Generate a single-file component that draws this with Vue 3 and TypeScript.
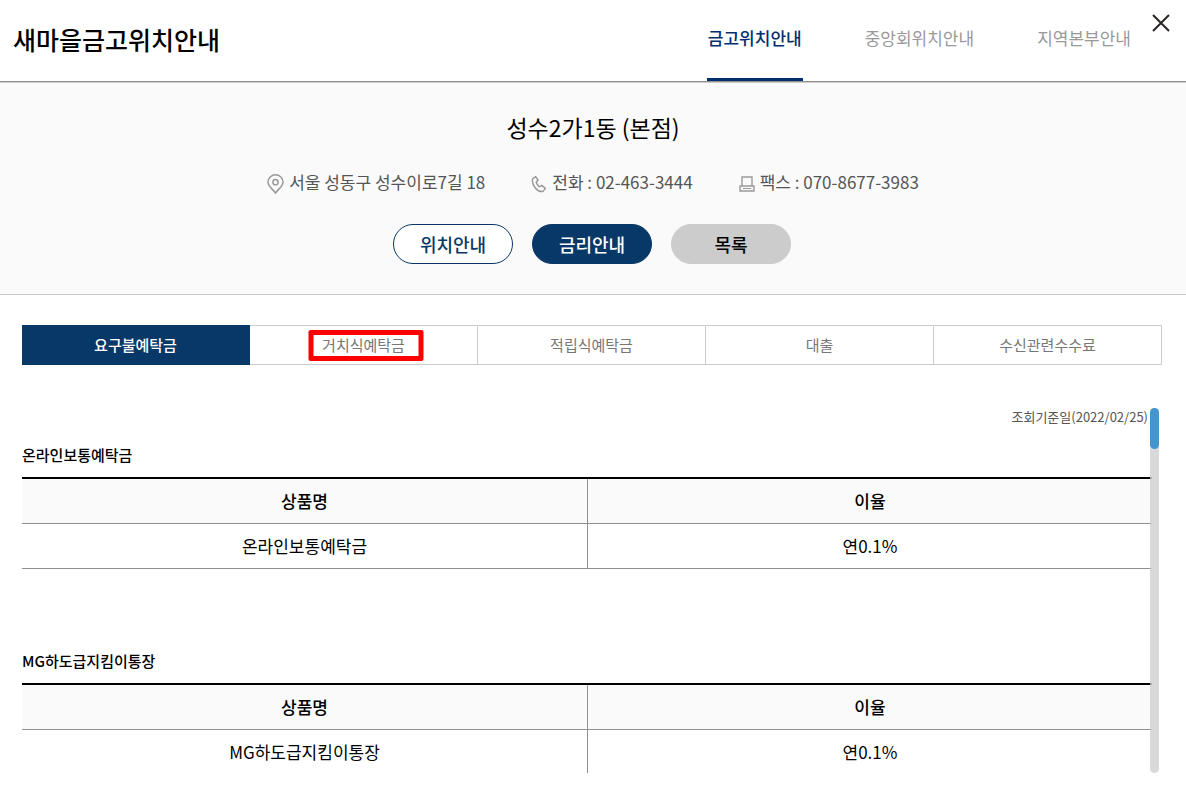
<script setup lang="ts">
import { ref } from 'vue'

interface RateTable {
  title: string
  product: string
  rate: string
}

const areas: string[] = ['금고위치안내', '중앙회위치안내', '지역본부안내']
const categories: string[] = ['요구불예탁금', '거치식예탁금', '적립식예탁금', '대출', '수신관련수수료']
const tables: RateTable[] = [
  { title: '온라인보통예탁금', product: '온라인보통예탁금', rate: '연0.1%' },
  { title: 'MG하도급지킴이통장', product: 'MG하도급지킴이통장', rate: '연0.1%' },
]

const activeArea = ref(0)
const activeCategory = ref(0)
const markedCategory = 1
</script>

<template>
  <div class="page">
    <header class="header">
      <h1 class="title">새마을금고위치안내</h1>
      <nav class="areas">
        <a
          v-for="(area, i) in areas"
          :key="area"
          href="#"
          class="area"
          :class="{ active: i === activeArea }"
          @click.prevent="activeArea = i"
        >{{ area }}</a>
      </nav>
      <button class="close" type="button" aria-label="닫기">
        <svg width="18" height="18" viewBox="0 0 18 18" fill="none" stroke="#2b2523" stroke-width="2">
          <path d="M1 1 17 17M17 1 1 17" />
        </svg>
      </button>
    </header>

    <section class="branch">
      <h2 class="branch-name">성수2가1동 (본점)</h2>
      <ul class="contacts">
        <li class="contact">
          <svg width="17" height="20" viewBox="0 0 17 20" fill="none" stroke="#999" stroke-width="1.5">
            <path d="M8.500 19C6.500 15.800 1 12.500 1 8.200a7.500 7.400 0 0 1 15 0C16 12.500 10.500 15.800 8.500 19Z" />
            <circle cx="8.500" cy="8.200" r="2.600" />
          </svg>
          <span>서울 성동구 성수이로7길 18</span>
        </li>
        <li class="contact">
          <svg width="16" height="18" viewBox="0 0 16 18" fill="none" stroke="#999" stroke-width="1.5" stroke-linejoin="round">
            <path d="M1.600 4 4.600 1.600 7 5 5.200 7.200c.6 1.800 1.600 3.300 3 4.600l2.600-1.400 3.600 3-2.400 3C6.600 17.600.4 10 1.600 4Z" />
          </svg>
          <span>전화 : 02-463-3444</span>
        </li>
        <li class="contact">
          <svg width="16" height="16" viewBox="0 0 16 16" fill="none" stroke="#999" stroke-width="1.4">
            <path d="M3 10V1h10v9M1 10h14v5H1Z" />
            <path d="M4 12.500h8" stroke-width="1" />
          </svg>
          <span>팩스 : 070-8677-3983</span>
        </li>
      </ul>
      <div class="actions">
        <button class="pill outline" type="button">위치안내</button>
        <button class="pill solid" type="button">금리안내</button>
        <button class="pill grey" type="button">목록</button>
      </div>
    </section>

    <main class="content">
      <div class="tabs" role="tablist">
        <button
          v-for="(category, i) in categories"
          :key="category"
          type="button"
          role="tab"
          class="tab"
          :class="{ active: i === activeCategory, marked: i === markedCategory }"
          :aria-selected="i === activeCategory"
          @click="activeCategory = i"
        >{{ category }}</button>
      </div>

      <div class="scroller">
        <div class="rates">
          <p class="base-date">조회기준일(2022/02/25)</p>
          <section v-for="item in tables" :key="item.title" class="rate">
            <h3 class="rate-title">{{ item.title }}</h3>
            <table class="rate-table">
              <thead>
                <tr>
                  <th scope="col">상품명</th>
                  <th scope="col">이율</th>
                </tr>
              </thead>
              <tbody>
                <tr>
                  <td>{{ item.product }}</td>
                  <td>{{ item.rate }}</td>
                </tr>
              </tbody>
            </table>
          </section>
        </div>
        <div class="track"><div class="thumb"></div></div>
      </div>
    </main>
  </div>
</template>

<style>
html,
body {
  margin: 0;
  background: #fff;
}
</style>

<style scoped>
.page {
  display: flex;
  flex-direction: column;
  height: 100vh;
  box-sizing: border-box;
  color: #000;
  font-family: 'Noto Sans CJK KR', 'Noto Sans', sans-serif;
}

h1,
h2,
h3,
p,
ul {
  margin: 0;
  padding: 0;
}

button {
  font-family: inherit;
  cursor: pointer;
}

.header {
  position: relative;
  display: flex;
  flex: none;
  justify-content: space-between;
  height: 81px;
  padding: 0 54px 0 13px;
  border-bottom: 1px solid #909090;
  box-shadow: 0 1px 0 #ccc;
}

.title {
  font-size: 25px;
  font-weight: 500;
  line-height: 78px;
}

.areas {
  display: flex;
  gap: 61px;
}

.area {
  box-sizing: border-box;
  height: 81px;
  padding: 0 1px;
  color: #999;
  font-size: 17px;
  line-height: 76px;
  text-decoration: none;
}

.area.active {
  border-bottom: 3px solid #00306c;
  color: #00306c;
  font-weight: 500;
}

.close {
  position: absolute;
  top: 14px;
  right: 16px;
  width: 18px;
  height: 18px;
  padding: 0;
  border: 0;
  background: none;
}

.close svg {
  display: block;
}

.branch {
  display: flex;
  flex: none;
  flex-direction: column;
  align-items: center;
  padding: 28px 0 30px;
  border-bottom: 1px solid #ccc;
  background: #fafafa;
}

.branch-name {
  font-size: 23px;
  font-weight: 400;
  line-height: 34px;
}

.contacts {
  display: flex;
  gap: 46px;
  margin-top: 22px;
  color: #555;
  font-size: 17px;
  line-height: 32px;
  list-style: none;
}

.contact {
  display: flex;
  align-items: center;
  gap: 5px;
}

.contact svg {
  margin-top: 4px;
}

.actions {
  display: flex;
  gap: 19px;
  margin-top: 26px;
  padding-right: 2px;
}

.pill {
  width: 120px;
  height: 40px;
  padding: 0;
  border: 1px solid #083868;
  border-radius: 20px;
  font-size: 18px;
  font-weight: 500;
}

.outline {
  background: #fff;
  color: #083868;
}

.solid {
  background: #083868;
  color: #fff;
}

.grey {
  border-color: #ccc;
  background: #ccc;
  color: #000;
}

.content {
  display: flex;
  flex: 1;
  flex-direction: column;
  min-height: 0;
  padding: 30px 24px 19px 22px;
}

.tabs {
  display: flex;
  flex: none;
}

.tab {
  position: relative;
  flex: 1;
  height: 40px;
  padding: 0 0 2px;
  border: 1px solid #ccc;
  border-left-width: 0;
  background: #fff;
  color: #777;
  font-size: 15px;
}

.tab.active {
  border-color: #083868;
  background: #083868;
  color: #fff;
  font-weight: 500;
}

.tab.marked::after {
  position: absolute;
  top: 4px;
  left: calc(50% + 2px);
  width: 105px;
  height: 21px;
  border: 5px solid #f00;
  border-radius: 2px;
  content: '';
  transform: translateX(-50%);
}

.scroller {
  position: relative;
  flex: 1;
  min-height: 0;
  margin-top: 43px;
  overflow: hidden;
}

.rates {
  padding-right: 10px;
}

.base-date {
  padding-right: 4px;
  color: #555;
  font-size: 13px;
  line-height: 18px;
  text-align: right;
}

.rate {
  padding-top: 16px;
  margin-bottom: 63px;
}

.rate-title {
  font-size: 15px;
  font-weight: 500;
  line-height: 26px;
}

.rate-table {
  width: 100%;
  margin-top: 9px;
  border-top: 2px solid #000;
  border-spacing: 0;
  table-layout: fixed;
}

.rate-table th,
.rate-table td {
  height: 42px;
  padding: 0 0 2px;
  border-bottom: 1px solid #909090;
  font-size: 17px;
  font-weight: 400;
  text-align: center;
}

.rate-table th {
  background: #fafafa;
  font-weight: 500;
}

.rate-table th:last-child,
.rate-table td:last-child {
  border-left: 1px solid #909090;
}

.track {
  position: absolute;
  top: 0;
  right: 3px;
  bottom: 0;
  width: 9px;
  border-radius: 5px;
  background: rgb(208 208 208 / 80%);
}

.thumb {
  height: 41px;
  border-radius: 5px;
  background: #4296d0;
}
</style>
